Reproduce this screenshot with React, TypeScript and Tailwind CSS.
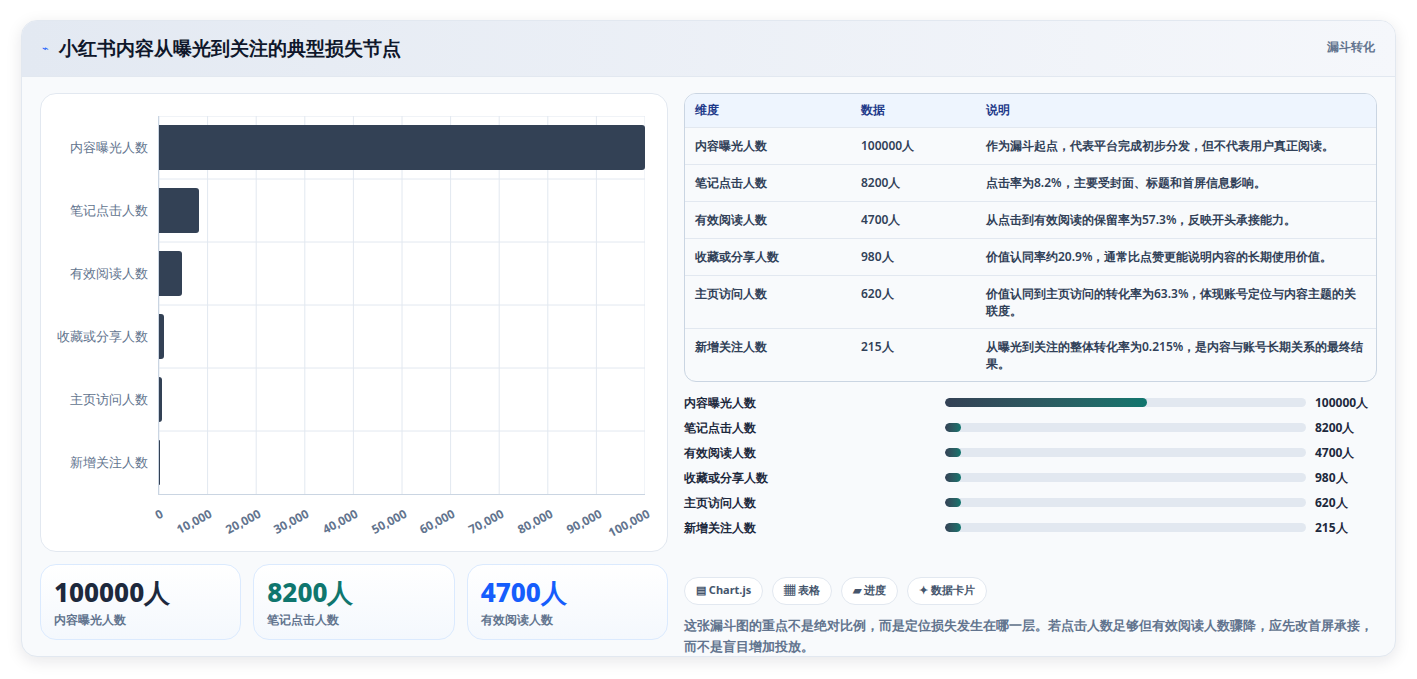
import React from "react"

const rows = [
  { name: "内容曝光人数", value: 100000, note: "作为漏斗起点，代表平台完成初步分发，但不代表用户真正阅读。" },
  { name: "笔记点击人数", value: 8200, note: "点击率为8.2%，主要受封面、标题和首屏信息影响。" },
  { name: "有效阅读人数", value: 4700, note: "从点击到有效阅读的保留率为57.3%，反映开头承接能力。" },
  { name: "收藏或分享人数", value: 980, note: "价值认同率约20.9%，通常比点赞更能说明内容的长期使用价值。" },
  { name: "主页访问人数", value: 620, note: "价值认同到主页访问的转化率为63.3%，体现账号定位与内容主题的关联度。" },
  { name: "新增关注人数", value: 215, note: "从曝光到关注的整体转化率为0.215%，是内容与账号长期关系的最终结果。" },
]

const ticks = ["0", "10,000", "20,000", "30,000", "40,000", "50,000", "60,000", "70,000", "80,000", "90,000", "100,000"]

function Chart() {
  return (
    <div className="rounded-2xl border border-slate-200 bg-white pt-[22px] pb-[26px] pr-[22px] flex flex-col">
      <div className="flex">
        <div className="w-[117px] flex flex-col">
          {rows.map((r) => (
            <div key={r.name} className="h-[63px] flex items-center justify-end pr-[10px] text-[13px] text-slate-500">
              {r.name}
            </div>
          ))}
        </div>
        <div className="relative flex-1 border-l border-b border-slate-300">
          <svg className="absolute inset-0 w-full h-full" preserveAspectRatio="none" viewBox="0 0 100 6">
            {ticks.map((_, i) => (
              <line key={i} x1={i * 10} x2={i * 10} y1={0} y2={6} stroke="#e2e8f0" strokeWidth={1} vectorEffect="non-scaling-stroke" />
            ))}
            {[0, 1, 2, 3, 4, 5].map((i) => (
              <line key={"h" + i} x1={0} x2={100} y1={i} y2={i} stroke="#e2e8f0" strokeWidth={1} vectorEffect="non-scaling-stroke" />
            ))}
          </svg>
          <div className="relative flex flex-col">
            {rows.map((r) => (
              <div key={r.name} className="h-[63px] flex items-center">
                <div
                  className="h-[45px] bg-[#334155] rounded-r-[3px]"
                  style={{ width: `${(r.value / 100000) * 100}%`, minWidth: 1 }}
                />
              </div>
            ))}
          </div>
        </div>
      </div>
      <div className="flex ml-[117px] h-[30px] relative">
        {ticks.map((t, i) => (
          <span
            key={t}
            className="absolute top-[10px] text-[12px] font-bold text-slate-500 whitespace-nowrap origin-top-right -rotate-[28deg]"
            style={{ right: `${100 - i * 10}%` }}
          >
            {t}
          </span>
        ))}
      </div>
    </div>
  )
}

function Stat({ value, label, color }: { value: string; label: string; color: string }) {
  return (
    <div className="flex-1 rounded-2xl border border-blue-100 bg-gradient-to-b from-white to-[#f4f8fd] px-[13px] pt-[10px] pb-[10px]">
      <div className={`text-[26px] font-extrabold leading-[34px] ${color}`}>{value}</div>
      <div className="text-[12px] font-semibold text-slate-500 mt-[2px]">{label}</div>
    </div>
  )
}

export default function App() {
  return (
    <div className="min-h-screen bg-white pt-[20px] pl-[21px] pr-[21px] font-['Noto_Sans_CJK_SC','Noto_Sans',sans-serif]">
      <div className="w-[1375px] h-[637px] rounded-2xl border border-slate-200 bg-[#f8fafc] shadow-[0_4px_16px_rgba(15,23,42,0.10)] overflow-hidden">
        <div className="h-[56px] flex items-center justify-between pl-[20px] pr-[20px] border-b border-slate-200 bg-gradient-to-r from-[#e3e9f2] to-[#f5f7fb]">
          <div className="flex items-center gap-[10px]">
            <span className="text-[11px] text-blue-600">⌁</span>
            <h1 className="text-[19px] font-bold text-slate-900">小红书内容从曝光到关注的典型损失节点</h1>
          </div>
          <span className="text-[12px] font-bold text-slate-500 self-start mt-[17px]">漏斗转化</span>
        </div>
        <div className="flex gap-[16px] px-[18px] pt-[16px]">
          <div className="w-[628px] flex flex-col gap-[12px]">
            <Chart />
            <div className="flex gap-[12px]">
              <Stat value="100000人" label="内容曝光人数" color="text-slate-800" />
              <Stat value="8200人" label="笔记点击人数" color="text-[#0f766e]" />
              <Stat value="4700人" label="有效阅读人数" color="text-blue-600" />
            </div>
          </div>
          <div className="flex-1 flex flex-col">
            <div className="rounded-xl border border-slate-300 overflow-hidden bg-[#f8fafc]">
              <table className="w-full text-[12px] text-slate-700 font-semibold">
                <thead>
                  <tr className="bg-[#eef5fe] text-[#1e3a8a] h-[33px] text-left">
                    <th className="pl-[10px] w-[176px] font-semibold">维度</th>
                    <th className="w-[125px] font-semibold">数据</th>
                    <th className="font-semibold">说明</th>
                  </tr>
                </thead>
                <tbody>
                  {rows.map((r) => (
                    <tr key={r.name} className="border-t border-slate-200 align-top">
                      <td className="pl-[10px] py-[9px]">{r.name}</td>
                      <td className="py-[9px]">{r.value}人</td>
                      <td className="py-[9px] pr-[10px] leading-[17px]">{r.note}</td>
                    </tr>
                  ))}
                </tbody>
              </table>
            </div>
            <div className="flex flex-col gap-[7px] mt-[12px]">
              {rows.map((r, i) => (
                <div key={r.name} className="flex items-center h-[18px] text-[12px] font-semibold text-slate-800">
                  <span className="w-[261px]">{r.name}</span>
                  <div className="w-[361px] h-[9px] rounded-full bg-slate-200 overflow-hidden">
                    <div
                      className="h-full rounded-full bg-gradient-to-r from-[#334155] to-[#0f766e]"
                      style={{ width: i === 0 ? "56%" : "16px" }}
                    />
                  </div>
                  <span className="ml-[9px] font-bold">{r.value}人</span>
                </div>
              ))}
            </div>
            <div className="flex gap-[9px] mt-[40px]">
              {["▤ Chart.js", "▦ 表格", "▰ 进度", "✦ 数据卡片"].map((c) => (
                <span key={c} className="h-[28px] px-[11px] flex items-center rounded-full border border-slate-200 bg-white text-[11px] font-bold text-slate-600">
                  {c}
                </span>
              ))}
            </div>
            <p className="mt-[10px] text-[13px] leading-[21px] font-semibold text-slate-500">
              这张漏斗图的重点不是绝对比例，而是定位损失发生在哪一层。若点击人数足够但有效阅读人数骤降，应先改首屏承接，而不是盲目增加投放。
            </p>
          </div>
        </div>
      </div>
    </div>
  )
}
